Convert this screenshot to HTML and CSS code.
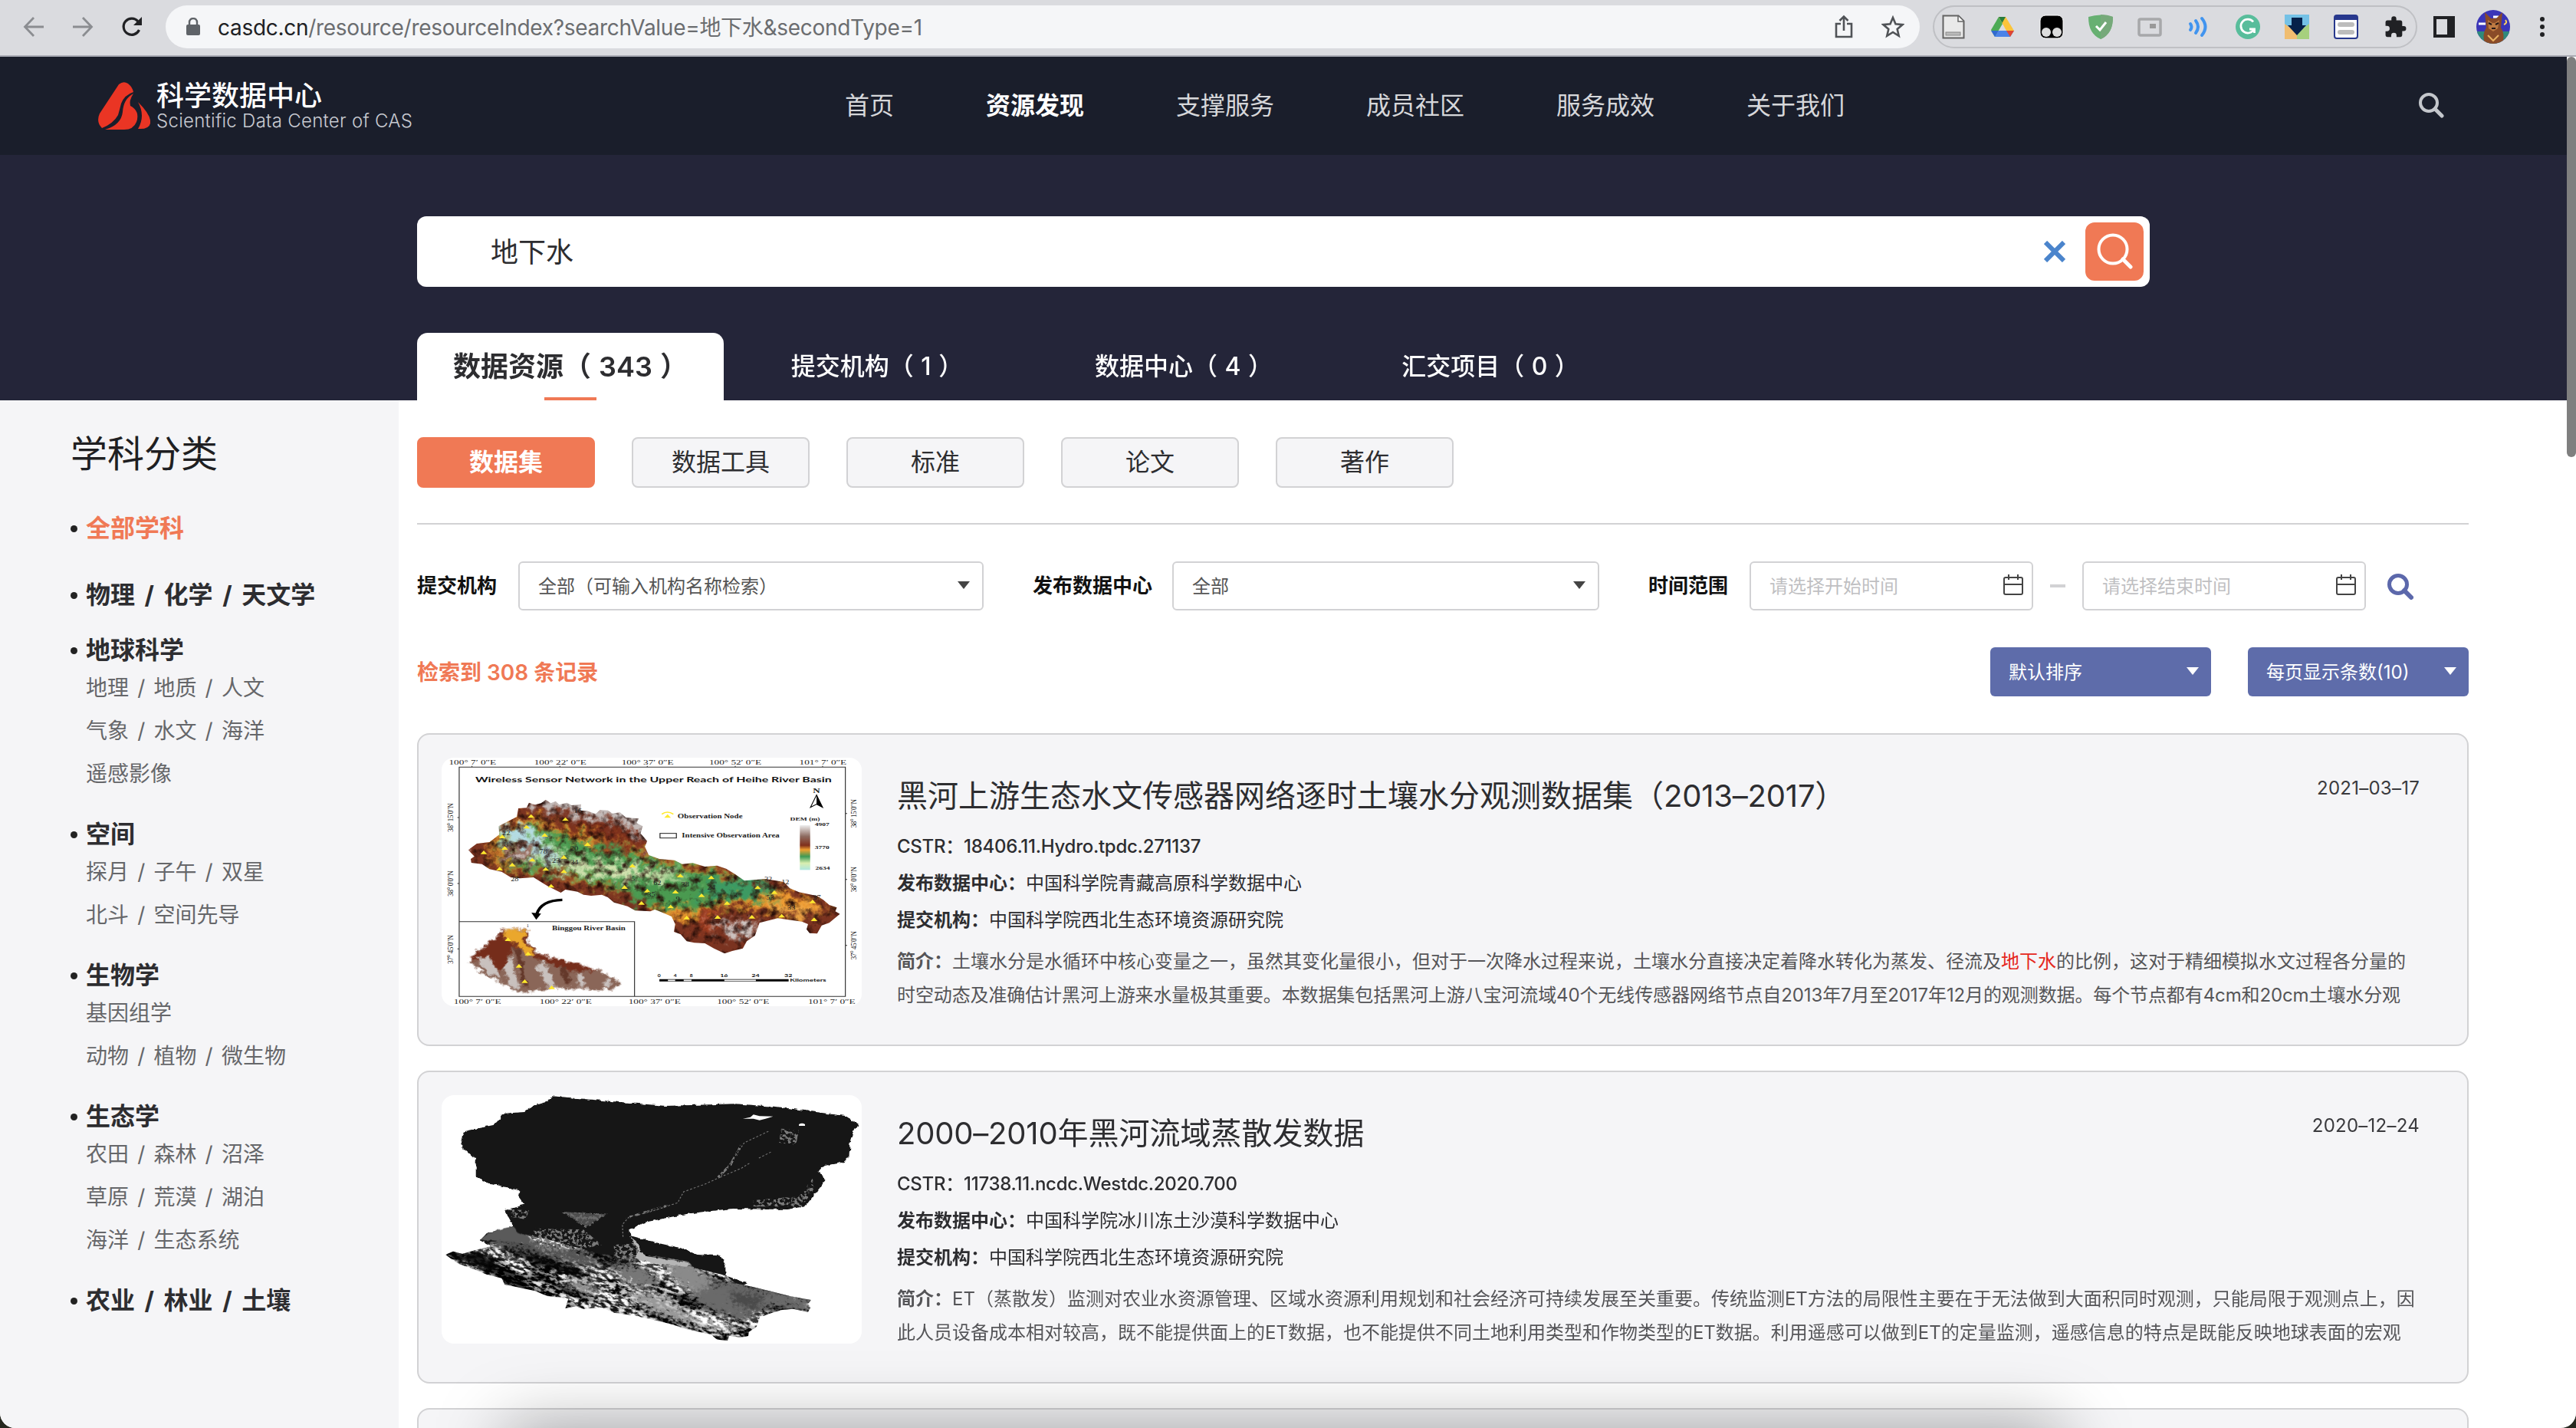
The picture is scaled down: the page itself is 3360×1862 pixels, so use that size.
FILE: index.html
```html
<!DOCTYPE html>
<html lang="zh-CN">
<head>
<meta charset="utf-8">
<title>科学数据中心</title>
<link rel="stylesheet" href="styles.css">
</head>
<body>
<div class="window">
  <div class="chrome">
    <div class="chrome-nav">
      <svg width="28" height="28" viewBox="0 0 28 28" fill="none" stroke="#8b8d91" stroke-width="2.8"><path d="M27 14H3M14 2L2.500 14L14 26"/></svg>
      <svg width="28" height="28" viewBox="0 0 28 28" fill="none" stroke="#8b8d91" stroke-width="2.800"><path d="M1 14H25M14 2L25.500 14L14 26"/></svg>
      <svg width="28" height="28" viewBox="0 0 28 28" fill="none" stroke="#202124" stroke-width="3.200"><path d="M23.500 18A10.600 10.600 0 1 1 22 7"/><path d="M27 1v11H16z" fill="#202124" stroke="none"/></svg>
    </div>
    <div class="urlbar">
      <svg width="18" height="24" viewBox="0 0 18 24"><rect x="0" y="9" width="18" height="14" rx="2" fill="#5f6368"/><path d="M4 10V6a5 5 0 0 1 10 0v4" fill="none" stroke="#5f6368" stroke-width="2.400"/></svg>
      <div class="url"><b>casdc.cn</b>/resource/resourceIndex?searchValue=地下水&amp;secondType=1</div>
      <svg width="24" height="32" viewBox="0 0 24 32" fill="none" stroke="#505357" stroke-width="2.600"><path d="M8 12H2v17h20V12h-6M12 21V3M6.500 8L12 2.500L17.500 8"/></svg>
      <svg width="30" height="30" viewBox="0 0 30 30" fill="none" stroke="#505357" stroke-width="2.600"><path d="M15 3l3.500 8.300 9 .8-6.800 5.900 2 8.800L15 22l-7.700 4.800 2-8.800L2.500 12.100l9-.8z"/></svg>
    </div>
    <div class="extensions">
      <svg viewBox="0 0 32 32"><path d="M2.500 1.500h20l7 7v22h-27z" fill="#e9e9e9" stroke="#636363" stroke-width="2"/><path d="M22 2v7h7" fill="#fff" stroke="#636363" stroke-width="1.500"/><rect x="6" y="23" width="19" height="4" fill="#bbb" stroke="#888"/></svg>
      <svg viewBox="0 0 32 32"><path d="M11 3l5 9L6 29 1 20z" fill="#4caa55"/><path d="M11 3h9l11 18H21z" fill="#fbc43a"/><path d="M11 3h9l-4.500 8z" fill="#287c3d"/><path d="M6 29l5-8h20l-5 8z" fill="#4b82e8"/><path d="M21 21h10l-5 8z" fill="#e04632"/><path d="M1 21h10l-5 8z" fill="#316ad0"/></svg>
      <svg viewBox="0 0 32 32"><rect x="1" y="1" width="30" height="30" rx="7" stroke="#fff" fill="#000"/><circle cx="9" cy="23" r="6" fill="#ddd"/><circle cx="23" cy="23" r="6" fill="#ddd"/></svg>
      <svg viewBox="0 0 32 32"><path d="M0 3Q16-2 32 3C32 18 27 27 16 32C5 27 0 18 0 3z" fill="#67b072"/><path d="M16 0Q25 0 32 3C32 18 27 27 16 32z" fill="#76a97a"/><path d="M10 15l5 5 8-10" stroke="#fff" stroke-width="3" fill="none"/></svg>
      <svg viewBox="0 0 32 32"><rect x="2" y="6" width="28" height="21" rx="2" fill="none" stroke="#a7a8aa" stroke-width="3.500"/><rect x="16" y="12" width="8" height="6" fill="#999"/></svg>
      <svg viewBox="0 0 32 32" fill="none" stroke="#4194ef" stroke-width="4" stroke-linecap="round"><path d="M5 12q3 4 0 8M12 8q6 8 0 16M20 5q9 11 0 22"/></svg>
      <svg viewBox="0 0 32 32"><circle cx="16" cy="16" r="16" fill="#58bd9b"/><path d="M23 9.500A9 9 0 1 0 24 19M18 19h6.500v5" fill="none" stroke="#fff" stroke-width="2.800"/></svg>
      <svg viewBox="0 0 32 32"><path d="M0 0h32v16H0z" fill="#74c1e6"/><path d="M0 12l16 12v8H0z" fill="#f0bd70"/><path d="M32 12L16 24v8h16z" fill="#a6d07d"/><path d="M9 4h14v10h5L16 27 4 14h5z" fill="#06214a"/></svg>
      <svg viewBox="0 0 32 32"><rect x="1" y="1" width="30" height="30" rx="3" fill="#fff" stroke="#27388d" stroke-width="2"/><path d="M1 1h30v6H1z" fill="#27388d"/><rect x="5" y="10" width="22" height="6" rx="3" fill="#bcbcbc"/><rect x="5" y="20" width="22" height="6" rx="3" fill="#bcbcbc"/></svg>
      <svg viewBox="0 0 32 32"><path transform="translate(1 1) scale(1.280)" d="M20.500 11H19V7a2 2 0 0 0-2-2h-4V3.500a2.500 2.500 0 0 0-5 0V5H4a2 2 0 0 0-2 2v3.800h1.500a2.700 2.700 0 0 1 0 5.400H2V20a2 2 0 0 0 2 2h3.800v-1.500a2.700 2.700 0 0 1 5.400 0V22H17a2 2 0 0 0 2-2v-4h1.500a2.500 2.500 0 0 0 0-5z" fill="#202124"/></svg>
    </div>
    <svg class="panel" width="28" height="28" viewBox="0 0 28 28"><path d="M0 0h28v28H0zM4 4v20h14V4z" fill="#202124" fill-rule="evenodd"/></svg>
    <svg class="avatar" width="44" height="44" viewBox="0 0 44 44"><clipPath id="av"><circle cx="22" cy="22" r="22"/></clipPath><g clip-path="url(#av)"><path d="M0 0h44v44H0z" fill="#3a35b8"/><path d="M0 28h44v16H0z" fill="#2f8a7c"/><path d="M3 18h9M22 9h7" stroke="#fff" stroke-width="3"/><path d="M38 13q3 4-2 6" stroke="#ffd35b" fill="none" stroke-width="2"/><path d="M11 3l8 8h7l8-8-2 20q6 8 2 21H11q-4-12 2-21z" fill="#8a4b28"/><path d="M15 13l6 4h3l6-4-2 11-6 4-6-4z" fill="#bd7a42"/><path d="M15 33l7 7 7-7" stroke="#eab161" fill="none" stroke-width="2"/><path d="M16 17l4 2M29 17l-4 2M20 24h5" stroke="#251717" stroke-width="2"/></g></svg>
    <svg class="dots" width="8" height="28" viewBox="0 0 8 28" fill="#202124"><circle cx="4" cy="4" r="3"/><circle cx="4" cy="14" r="3"/><circle cx="4" cy="24" r="3"/></svg>
  </div>

  <div class="viewport">
    <div class="page">
      <header class="header">
        <div class="brand">
          <svg width="68" height="62" viewBox="0 0 68 62" fill="#ea3524"><path d="M27 3Q33-2 39 2Q45 7 46 13Q34 17 30 28Q28 36 26 43Q20 54 5 60Q-3 52 2 41z"/><path d="M46 15Q40 24 42 31Q55 38 50 52Q46 62 34 62H9Q30 56 32 39Q33 22 46 15z"/><path d="M52 26Q70 44 68 54Q66 62 52 61Q62 44 52 26z"/></svg>
          <div class="brand-text"><div class="brand-cn">科学数据中心</div><div class="brand-en">Scientific Data Center of CAS</div></div>
        </div>
        <nav class="nav"><a>首页</a><a class="on">资源发现</a><a>支撑服务</a><a>成员社区</a><a>服务成效</a><a>关于我们</a></nav>
        <svg class="head-search" width="34" height="34" viewBox="0 0 34 34" fill="none" stroke="#c4c7cc" stroke-width="4"><circle cx="14" cy="14" r="11"/><path d="M22 22l9 9" stroke-width="5" stroke-linecap="round"/></svg>
      </header>

      <section class="hero">
        <div class="search">
          <div class="search-value">地下水</div>
          <svg width="28" height="28" viewBox="0 0 28 28" stroke="#4a84cc" stroke-width="6"><path d="M2 2l24 24M26 2L2 26"/></svg>
          <div class="search-btn"><svg width="48" height="48" viewBox="0 0 48 48" fill="none" stroke="#fff" stroke-width="4"><circle cx="22" cy="21" r="18.500"/><path d="M35 34l10 10" stroke-width="5" stroke-linecap="round"/></svg></div>
        </div>
        <div class="tabs">
          <div class="tab active">数据资源（ 343 ）</div>
          <div class="tab">提交机构（ 1 ）</div>
          <div class="tab">数据中心（ 4 ）</div>
          <div class="tab">汇交项目（ 0 ）</div>
        </div>
      </section>

      <div class="body">
        <aside class="sidebar">
          <h2>学科分类</h2>
          <ul class="subjects">
            <li class="lone all"><h3>全部学科</h3></li>
            <li class="lone"><h3>物理 / 化学 / 天文学</h3></li>
            <li><h3>地球科学</h3><p>地理 / 地质 / 人文</p><p>气象 / 水文 / 海洋</p><p>遥感影像</p></li>
            <li><h3>空间</h3><p>探月 / 子午 / 双星</p><p>北斗 / 空间先导</p></li>
            <li><h3>生物学</h3><p>基因组学</p><p>动物 / 植物 / 微生物</p></li>
            <li><h3>生态学</h3><p>农田 / 森林 / 沼泽</p><p>草原 / 荒漠 / 湖泊</p><p>海洋 / 生态系统</p></li>
            <li><h3>农业 / 林业 / 土壤</h3></li>
          </ul>
        </aside>

        <main class="content">
          <div class="types"><span class="type on">数据集</span><span class="type">数据工具</span><span class="type">标准</span><span class="type">论文</span><span class="type">著作</span></div>
          <div class="filters">
            <label>提交机构</label><div class="select org">全部（可输入机构名称检索）<i class="caret"></i></div>
            <label>发布数据中心</label><div class="select center">全部<i class="caret"></i></div>
            <label>时间范围</label>
            <div class="select date">请选择开始时间<svg width="26" height="28" viewBox="0 0 26 28" fill="none" stroke="#444" stroke-width="2"><rect x="1" y="4" width="24" height="22" rx="2"/><path d="M1 13h24M7 0v7M19 0v7"/></svg></div>
            <i class="dash"></i>
            <div class="select date">请选择结束时间<svg width="26" height="28" viewBox="0 0 26 28" fill="none" stroke="#444" stroke-width="2"><rect x="1" y="4" width="24" height="22" rx="2"/><path d="M1 13h24M7 0v7M19 0v7"/></svg></div>
            <svg class="go" width="34" height="34" viewBox="0 0 34 34" fill="none" stroke="#5c68ab" stroke-width="5"><circle cx="14" cy="14" r="11.500"/><path d="M22 22l9 9" stroke-width="6" stroke-linecap="round"/></svg>
          </div>
          <div class="result-bar">
            <div class="count">检索到 308 条记录</div>
            <div class="drop">默认排序<i class="caret"></i></div>
            <div class="drop">每页显示条数(10)<i class="caret"></i></div>
          </div>

          <div class="cards">
            <article class="card">
              <svg class="thumb" viewBox="92 144 1385 972" preserveAspectRatio="none">
                <defs>
                  <filter id="terrain" x="-5%" y="-5%" width="110%" height="110%" color-interpolation-filters="sRGB">
                    <feGaussianBlur in="SourceGraphic" stdDeviation="13" result="b"/>
                    <feTurbulence type="fractalNoise" baseFrequency="0.035 0.030" numOctaves="4" seed="7" result="n"/>
                    <feDisplacementMap in="b" in2="n" scale="110" xChannelSelector="R" yChannelSelector="G" result="d"/>
                    <feColorMatrix in="n" type="matrix" values="0 0 0 0 0.150  0 0 0 0 0.050  0 0 0 0 0.030  0 0 2.600 0 -1.200" result="s"/>
                    <feComposite in="s" in2="d" operator="in" result="sh"/>
                    <feMerge><feMergeNode in="d"/><feMergeNode in="sh"/></feMerge>
                  </filter>
                  <filter id="edge" x="-5%" y="-5%" width="110%" height="110%" color-interpolation-filters="sRGB"><feGaussianBlur in="SourceGraphic" stdDeviation="3" result="b"/><feTurbulence type="fractalNoise" baseFrequency="0.050" numOctaves="3" seed="4" result="n"/><feDisplacementMap in="b" in2="n" scale="30" xChannelSelector="R" yChannelSelector="G"/></filter>
                  <linearGradient id="dem" x1="0" y1="0" x2="0" y2="1"><stop offset="0" stop-color="#eee"/><stop offset=".25" stop-color="#8d6b60"/><stop offset=".45" stop-color="#80301b"/><stop offset=".55" stop-color="#f0a030"/><stop offset=".7" stop-color="#3e9a55"/><stop offset=".85" stop-color="#d9eeb0"/><stop offset="1" stop-color="#aee6e0"/></linearGradient>
                  <clipPath id="basin"><path d="M180 505L208 480L250 474L282 445L280 412L340 375L345 342L372 340L380 320L400 328L420 322L435 308L452 322L468 314L480 328L505 320L520 330L552 326L550 350L572 352L600 364L614 348L640 350L655 362L680 358L700 378L742 382L735 400L755 412L748 440L770 470L762 492L775 525L810 540L860 545L885 560L920 556L960 570L1000 566L1030 578L1060 600L1090 625L1160 618L1220 630L1240 655L1270 670L1330 685L1350 700L1370 720L1395 730L1390 745L1405 755L1370 790L1345 800L1330 832L1305 830L1295 815L1300 795L1280 785L1200 772L1140 790L1125 840L1098 862L1085 890L1050 900L1025 910L990 890L960 870L925 868L900 862L880 835L858 825L862 795L850 765L810 745L795 738L780 745L730 742L705 725L660 710L640 690L620 680L585 684L560 680L540 668L500 660L485 672L440 645L395 612L350 616L320 612L290 590L250 580L225 560L190 555L188 540L200 530z"/></clipPath>
                </defs>
                <rect x="92" y="144" width="1385" height="972" fill="#fff"/>
                <g fill="none" stroke="#333" stroke-width="3"><path d="M150 181H1423V1078H150zM150 785H728V1078M192 176v6M482 176v6M770 176v6M1060 176v6M1348 176v6M144 378h6M144 636h6M144 892h6M1423 362h6M1423 620h6M1423 878h6"/></g>
                <g clip-path="url(#basin)"><g filter="url(#terrain)">
                  <path d="M150 270H1450V950H150z" fill="#7a3320"/>
                  <path d="M350 270L780 330L800 530L745 450L690 400L540 365L420 350z" fill="#c4bcba"/>
                  <path d="M240 440Q330 340 450 400T640 455Q760 530 1000 580Q1100 620 1230 670T1380 740L1200 765Q1040 690 940 760T740 690Q560 630 440 610T270 580z" fill="#ef9a2e"/>
                  <path d="M270 440Q340 365 460 430T640 480Q800 555 1000 595Q1130 640 1210 700Q1060 690 930 730T700 670Q560 615 440 598T290 560z" fill="#4a9a50"/>
                  <path d="M280 420Q350 370 430 460T560 540Q800 570 920 615Q800 640 680 620T500 590Q380 555 290 510z" fill="#b9d9a0"/>
                  <path d="M480 560Q620 550 850 605Q700 625 600 600T480 580z" fill="#d5e2b0"/>
                  <path d="M280 410Q350 380 410 455T490 560Q390 530 340 480T275 455z" fill="#b4dce4"/>
                  <ellipse cx="1060" cy="655" rx="130" ry="36" fill="#3c9a63"/>
                  <path d="M1150 690L1340 740L1280 780L1170 735z" fill="#eda545"/>
                  <path d="M600 465L730 480L700 500L600 495zM430 590H510V612H420z" fill="#8c3a20"/>
                  <path d="M500 400L640 410L740 440L740 500L640 450L500 430z" fill="#7c2f1b"/>
                  <path d="M960 775L1050 795L1130 785L1120 850L1030 835z" fill="#d2cbc9"/>
                  <path d="M960 740L980 800L940 830" fill="none" stroke="#d0481e" stroke-width="14"/>
                  <ellipse cx="335" cy="522" rx="50" ry="38" fill="#7a3520"/><ellipse cx="335" cy="528" rx="28" ry="24" fill="#d0c8c8"/>
                </g></g>
                <g filter="url(#edge)">
                  <path d="M300 815L378 815L375 870L405 908L470 940L540 965L610 975L680 1022L655 1052L540 1048L470 1045L345 1062L300 1030L230 990L185 940L200 910L240 875L290 850z" fill="#8a6658"/>
                  <path d="M300 815L378 815L375 870L405 908L610 975L520 980L410 930L330 880L290 980L185 930L240 875z" fill="#752d1b"/>
                  <path d="M205 925L250 920L290 1010L245 985zM300 950L320 920L350 1050L310 1030zM400 950L430 940L470 1040L440 1040zM540 990L560 985L560 1040H540zM630 1010L650 1010L645 1045H630z" fill="#c9c1be"/>
                  <path d="M330 880L350 900L380 1040L360 1040zM480 960L505 965L520 1030L500 1030z" fill="#64382a"/>
                  <path d="M300 815L378 818L360 860L400 915L380 918L330 865L295 850z" fill="#eaa72d"/>
                </g>
                <path d="M490 700Q420 702 406 755" fill="none" stroke="#000" stroke-width="10"/><path d="M388 750l32 4-16 24z"/>
                <g fill="#ffe92e"><path id="tri" d="M376 379l11-14 11 14z"/><use href="#tri" x="113" y="12"/><use href="#tri" x="-15" y="42"/><use href="#tri" x="-95" y="80"/><use href="#tri" x="45" y="74"/><use href="#tri" x="-87" y="125"/><use href="#tri" x="-156" y="142"/><use href="#tri" x="4" y="171"/><use href="#tri" x="-62" y="190"/><use href="#tri" x="-104" y="206"/><use href="#tri" x="48" y="207"/><use href="#tri" x="186" y="110"/><use href="#tri" x="108" y="160"/><use href="#tri" x="108" y="216"/><use href="#tri" x="334" y="194"/><use href="#tri" x="492" y="233"/><use href="#tri" x="594" y="240"/><use href="#tri" x="308" y="278"/><use href="#tri" x="383" y="292"/><use href="#tri" x="476" y="296"/><use href="#tri" x="562" y="310"/><use href="#tri" x="646" y="340"/><use href="#tri" x="747" y="279"/><use href="#tri" x="802" y="298"/><use href="#tri" x="928" y="334"/><use href="#tri" x="826" y="390"/><use href="#tri" x="728" y="394"/><use href="#tri" x="615" y="395"/><use href="#tri" x="513" y="397"/><use href="#tri" x="364" y="340"/><use href="#tri" x="460" y="354"/><use href="#tri" x="66" y="273"/><use href="#tri" x="933" y="404"/><use href="#tri" x="-76" y="482"/><use href="#tri" x="-10" y="538"/><use href="#tri" x="-40" y="586"/><use href="#tri" x="-21" y="646"/><use href="#tri" x="68" y="670"/><use href="#tri" x="450" y="0"/></g>
                <path d="M818 365q18-16 38 0" fill="none" stroke="#ffe92e" stroke-width="5"/>
                <rect x="812" y="440" width="54" height="18" fill="none" stroke="#222" stroke-width="3"/>
                <rect x="1273" y="408" width="34" height="175" fill="url(#dem)"/>
                <path d="M1328 290l-20 48 20-12 20 12z" fill="#fff" stroke="#000" stroke-width="3"/><path d="M1328 290v36l20 12z"/>
                <path d="M810 1015H1236" stroke="#000" stroke-width="9"/><path d="M838 1015h24M890 1015h26M1024 1015h104" stroke="#fff" stroke-width="5"/>
                <g class="map-serif" font-size="24">
                  <text x="116" y="170" textLength="156" lengthAdjust="spacingAndGlyphs">100° 7′ 0″E</text><text x="397" y="170" textLength="172" lengthAdjust="spacingAndGlyphs">100° 22′ 0″E</text><text x="685" y="170" textLength="172" lengthAdjust="spacingAndGlyphs">100° 37′ 0″E</text><text x="974" y="170" textLength="172" lengthAdjust="spacingAndGlyphs">100° 52′ 0″E</text><text x="1271" y="170" textLength="156" lengthAdjust="spacingAndGlyphs">101° 7′ 0″E</text>
                  <text x="132" y="1106" textLength="156" lengthAdjust="spacingAndGlyphs">100° 7′ 0″E</text><text x="415" y="1106" textLength="172" lengthAdjust="spacingAndGlyphs">100° 22′ 0″E</text><text x="708" y="1106" textLength="172" lengthAdjust="spacingAndGlyphs">100° 37′ 0″E</text><text x="1000" y="1106" textLength="172" lengthAdjust="spacingAndGlyphs">100° 52′ 0″E</text><text x="1300" y="1106" textLength="156" lengthAdjust="spacingAndGlyphs">101° 7′ 0″E</text>
                  <text transform="translate(131 434) rotate(-90)" font-size="27" textLength="112">38° 15′0″N</text><text transform="translate(131 686) rotate(-90)" font-size="27" textLength="100">38° 0′0″N</text><text transform="translate(131 950) rotate(-90)" font-size="27" textLength="112">37° 45′0″N</text>
                  <text transform="translate(1460 418) rotate(-90)" font-size="27" textLength="112">38° 15′0″N</text><text transform="translate(1460 670) rotate(-90)" font-size="27" textLength="100">38° 0′0″N</text><text transform="translate(1460 934) rotate(-90)" font-size="27" textLength="112">37° 45′0″N</text>
                </g>
                <g class="map-serif" font-weight="700" font-size="23">
                  <text x="870" y="380" textLength="214" lengthAdjust="spacingAndGlyphs">Observation Node</text><text x="884" y="457" textLength="322" lengthAdjust="spacingAndGlyphs">Intensive Observation Area</text><text x="456" y="818" textLength="242" lengthAdjust="spacingAndGlyphs">Binggou River Basin</text>
                  <text x="1241" y="389" font-size="17" textLength="98" lengthAdjust="spacingAndGlyphs">DEM (m)</text><text x="1322" y="410" font-size="17" textLength="48" lengthAdjust="spacingAndGlyphs">4907</text><text x="1322" y="502" font-size="17" textLength="48" lengthAdjust="spacingAndGlyphs">3770</text><text x="1324" y="581" font-size="17" textLength="48" lengthAdjust="spacingAndGlyphs">2634</text>
                  <text x="1316" y="281" font-size="24" textLength="24" lengthAdjust="spacingAndGlyphs">N</text>
                </g>
                <g class="map-serif" font-size="26"><text x="292" y="446">22</text><text x="298" y="492">8</text><text x="414" y="520">78</text><text x="456" y="555">23</text><text x="516" y="562">34</text><text x="516" y="506">20</text><text x="528" y="361">16</text><text x="320" y="628">28</text><text x="716" y="626">5</text><text x="790" y="641">62</text><text x="882" y="648">38</text><text x="968" y="661">24</text><text x="1054" y="690">3</text><text x="1162" y="698">53</text><text x="1232" y="738">33</text><text x="864" y="705">9</text><text x="770" y="688">35</text><text x="1156" y="628">32</text><text x="1212" y="640">12</text><text x="1316" y="698">37</text><text x="372" y="808" font-size="16">1</text></g>
                <g class="map-sans"><text x="203" y="241" font-size="29" font-weight="700" textLength="1175" lengthAdjust="spacingAndGlyphs">Wireless Sensor Network in the Upper Reach of Heihe River Basin</text>
                  <g font-size="17" font-weight="700"><text x="804" y="1003">0</text><text x="857" y="1003">4</text><text x="910" y="1003">8</text><text x="1010" y="1003" textLength="26" lengthAdjust="spacingAndGlyphs">16</text><text x="1114" y="1003" textLength="26" lengthAdjust="spacingAndGlyphs">24</text><text x="1222" y="1003" textLength="26" lengthAdjust="spacingAndGlyphs">32</text><text x="1240" y="1019" textLength="120" lengthAdjust="spacingAndGlyphs">Kilometers</text></g></g>
              </svg>
              <div class="info">
                <div class="title-row"><h4>黑河上游生态水文传感器网络逐时土壤水分观测数据集（<span class="num">2013–2017</span>）</h4><time>2021–03–17</time></div>
                <div class="meta cstr">CSTR：18406.11.Hydro.tpdc.271137</div>
                <div class="meta"><b>发布数据中心：</b>中国科学院青藏高原科学数据中心</div>
                <div class="meta"><b>提交机构：</b>中国科学院西北生态环境资源研究院</div>
                <div class="abstract"><p><b>简介：</b>土壤水分是水循环中核心变量之一，虽然其变化量很小，但对于一次降水过程来说，土壤水分直接决定着降水转化为蒸发、径流及<em>地下水</em>的比例，这对于精细模拟水文过程各分量的</p><p class="tight">时空动态及准确估计黑河上游来水量极其重要。本数据集包括黑河上游八宝河流域40个无线传感器网络节点自2013年7月至2017年12月的观测数据。每个节点都有4cm和20cm土壤水分观</p></div>
              </div>
            </article>

            <article class="card">
              <svg class="thumb" viewBox="92 114 1385 972" preserveAspectRatio="none">
                <defs>
                  <filter id="speckle" x="0" y="0" width="100%" height="100%" color-interpolation-filters="sRGB">
                    <feTurbulence type="fractalNoise" baseFrequency="0.045 0.090" numOctaves="4" seed="11" result="n"/>
                    <feColorMatrix in="n" type="matrix" values="5 2.500 0 0 -3.300  5 2.500 0 0 -3.300  5 2.500 0 0 -3.300  0 0 0 0 1" result="g"/>
                    <feTurbulence type="fractalNoise" baseFrequency="0.004 0.014" numOctaves="3" seed="21"/>
                    <feColorMatrix type="matrix" values="3.500 0 0 0 -1.250  3.500 0 0 0 -1.250  3.500 0 0 0 -1.250  0 0 0 0 1" result="m"/>
                    <feComposite in="g" in2="m" operator="arithmetic" k1="0.500" k2="0.500" k3="0.500" k4="-0.280"/>
                  </filter>
                  <filter id="dust" color-interpolation-filters="sRGB"><feTurbulence type="fractalNoise" baseFrequency="0.090" numOctaves="3" seed="3"/><feColorMatrix type="matrix" values="0 0 0 0 0.480  0 0 0 0 0.480  0 0 0 0 0.480  8 0 0 0 -3.800"/><feComposite in2="SourceGraphic" operator="in"/></filter>
                  <filter id="rough"><feTurbulence type="fractalNoise" baseFrequency="0.060" numOctaves="2" seed="2" result="n"/><feDisplacementMap in="SourceGraphic" in2="n" scale="12" xChannelSelector="R" yChannelSelector="G"/></filter>
                  <filter id="haze" color-interpolation-filters="sRGB"><feGaussianBlur in="SourceGraphic" stdDeviation="9" result="b"/><feTurbulence type="fractalNoise" baseFrequency="0.080" numOctaves="3" seed="5" result="n"/><feDisplacementMap in="b" in2="n" scale="70" xChannelSelector="R" yChannelSelector="G"/></filter>
                  <clipPath id="hills"><path d="M105 738L130 725L160 735L220 715L252 706L250 690L380 660L480 690L610 735L720 745L760 735L905 765L925 790L1030 820L1060 850L1110 862L1190 885L1240 900L1310 915L1300 930L1308 945L1300 962L1250 950L1210 955L1170 970L1140 985L1130 1020L1105 1040L1103 1056L1080 1062L1040 1055L1035 1074L1000 1070L980 1050L900 1030L850 1010L780 990L720 975L660 965L620 945L560 950L535 940L500 948L510 910L440 900L400 880L340 865L300 855L290 830L240 815L200 795L150 775L125 755z"/></clipPath>
                </defs>
                <rect x="92" y="114" width="1385" height="972" fill="#fff"/>
                <path filter="url(#rough)" fill="#171717" d="M457 118L830 156L1060 148L1200 160L1425 196L1468 232L1452 245L1438 300L1435 360L1420 375L1345 393L1334 415L1358 445L1340 475L1290 550L1230 561L1050 558L900 578L760 612L712 640L715 664L810 694L880 712L935 738L1010 742L1028 775L1028 820L1100 850L1050 880L800 850L600 800L250 700L220 682L240 655L330 628L300 565L365 542L345 510L348 487L230 452L205 432L205 365L155 310L167 255L265 230L300 185L365 180L395 155L440 140z"/>
                <g clip-path="url(#hills)">
                  <g transform="rotate(22 700 860)"><rect x="0" y="560" width="1500" height="620" filter="url(#speckle)"/></g>
                  <g filter="url(#haze)">
                    <path d="M105 735L240 715L290 790L230 800L150 770z" fill="#080808" opacity=".85"/>
                    <path d="M300 700L460 750L620 830L580 840L440 790L300 740z" fill="#0a0a0a" opacity=".7"/>
                    <path d="M200 660L420 690L560 730L640 790L560 780L400 730L250 700z" fill="#555"/>
                    <path d="M640 770L740 780L820 830L760 870L690 840z" fill="#777"/>
                    <path d="M820 760L910 770L1000 840L940 890L860 850z" fill="#8a8a8a"/>
                    <path d="M900 890L1040 840L1310 910L1310 960L1180 940L1090 1000L960 950z" fill="#6a6a6a"/>
                    <path d="M1040 880L1160 900L1120 960L1060 930z" fill="#4a4a4a"/>
                    <path d="M480 840L560 845L640 890L560 890z" fill="#888"/>
                    <path d="M680 870L830 890L900 960L1080 1020L1060 1050L900 1010L760 950z" fill="#fff" opacity=".6"/>
                    <path d="M570 640L860 700L1040 750V810L920 770L760 740L700 760L560 720z" fill="#191919"/>
                  </g>
                </g>
                <path d="M220 680Q250 640 330 628L340 650Q400 670 450 740L360 690z" fill="#5a5a5a" filter="url(#rough)"/>
                <g filter="url(#dust)"><path fill="#777" d="M485 570L640 578L570 635zM400 635L560 640L620 700L440 740L380 690zM660 700L740 690L740 755L660 750zM1210 245L1270 250L1260 310L1205 300zM1120 525L1270 510L1315 440L1320 480L1280 550H1120zM310 560L380 565L370 600L320 590z"/></g>
                <path d="M490 570L635 580L570 630z" fill="#666" opacity=".7" filter="url(#rough)"/>
                <path d="M712 665L738 690L750 730L770 745L910 770L900 785L780 770L730 750L742 720z" fill="#b5b5b5" filter="url(#rough)"/>
                <g fill="none" stroke="#777" stroke-width="3" stroke-dasharray="7 6"><path d="M690 668L688 620L710 590L780 570L870 535L890 492L960 462L1010 435L1050 370L1090 300L1170 255M1010 435L1080 400L1110 378M1138 360L1180 335"/></g>
                <path d="M700 595L790 562L840 545M1000 440L1045 385L1080 310" fill="none" stroke="#555" stroke-width="9" filter="url(#dust)"/>
                <path d="M1085 206L1110 200L1120 190L1140 196L1185 197L1160 206L1140 212L1120 206zM1270 228q10-8 20 0v6h-20z" fill="#fff"/>
              </svg>
              <div class="info">
                <div class="title-row"><h4><span class="num">2000–2010</span>年黑河流域蒸散发数据</h4><time>2020–12–24</time></div>
                <div class="meta cstr">CSTR：11738.11.ncdc.Westdc.2020.700</div>
                <div class="meta"><b>发布数据中心：</b>中国科学院冰川冻土沙漠科学数据中心</div>
                <div class="meta"><b>提交机构：</b>中国科学院西北生态环境资源研究院</div>
                <div class="abstract"><p><b>简介：</b>ET（蒸散发）监测对农业水资源管理、区域水资源利用规划和社会经济可持续发展至关重要。传统监测ET方法的局限性主要在于无法做到大面积同时观测，只能局限于观测点上，因</p><p>此人员设备成本相对较高，既不能提供面上的ET数据，也不能提供不同土地利用类型和作物类型的ET数据。利用遥感可以做到ET的定量监测，遥感信息的特点是既能反映地球表面的宏观</p></div>
              </div>
            </article>

            <article class="card"></article>
          </div>
        </main>
      </div>
    </div>
    <div class="scrollbar"><div class="thumb-bar"></div></div>
  </div>
  <div class="dock-shadow"></div>
</div>
</body>
</html>
```
FILE: styles.css
```css
* { box-sizing: border-box; }
body { margin: 0; background: #26281f; font-family: Inter, "Noto Sans CJK SC", sans-serif; color: #2d2d30; }
h2, h3, h4, p, ul { margin: 0; padding: 0; font-weight: 400; }
svg { display: block; flex: none; }
.window { position: relative; width: 3360px; height: 1862px; overflow: hidden; display: flex; flex-direction: column; border-radius: 0 0 20px 20px; background: #fff; }

/* browser toolbar */
.chrome { height: 74px; flex: none; display: flex; align-items: center; padding-bottom: 2px; background: #dadbdf; border-bottom: 2px solid #a9abb4; }
.chrome-nav { display: flex; gap: 36px; padding-left: 30px; width: 216px; }
.urlbar { width: 2288px; height: 56px; border-radius: 28px; background: #f5f6f8; display: flex; align-items: center; padding: 0 20px 0 27px; }
.url { flex: 1; margin-left: 23px; padding-top: 2px; font-size: 28px; line-height: 40px; letter-spacing: -0.290px; color: #6b6d70; white-space: nowrap; }
.url b { font-weight: 400; color: #202124; }
.urlbar > svg:nth-of-type(2) { margin-right: 37px; }
.extensions { width: 632px; height: 56px; margin-left: 17px; border: 2px solid #bfc0c4; border-radius: 28px; display: flex; align-items: center; gap: 32px; padding-left: 9px; }
.extensions svg { width: 32px; height: 32px; }
.panel { margin-left: 21px; }
.avatar { margin-left: 28px; }
.dots { margin-left: 38px; }

.viewport { flex: 1; display: flex; min-height: 0; }
.page { width: 3348px; display: flex; flex-direction: column; }
.scrollbar { width: 12px; background: #fff; }
.thumb-bar { height: 522px; background: #7f7f7f; border-radius: 6px; }

/* site header */
.header { height: 128px; flex: none; background: #1a1e2b; display: flex; align-items: center; padding-left: 128px; }
.brand { width: 974px; display: flex; gap: 8px; align-items: center; }
.brand-text { color: #fff; white-space: nowrap; padding-top: 2px; }
.brand-cn { font-size: 36px; line-height: 38px; font-weight: 500; }
.brand-en { font-size: 24px; line-height: 28px; letter-spacing: 0.280px; font-weight: 300; color: #c9cbd2; }
.nav { display: flex; gap: 120px; width: 2053px; font-size: 32px; line-height: 44px; color: #d6d7da; }
.nav .on { color: #fff; font-weight: 700; }
.head-search { margin: 0 0 2px -1px; }

/* search and result tabs */
.hero { height: 320px; flex: none; background: #242539; padding: 80px 0 0 544px; }
.search { width: 2260px; height: 92px; background: #fff; border-radius: 12px; display: flex; align-items: center; padding: 0 8px 0 96px; }
.search-value { flex: 1; padding-top: 2px; font-size: 36px; line-height: 48px; }
.search-btn { width: 76px; height: 76px; margin-left: 26px; border-radius: 12px; background: #f07955; display: flex; align-items: center; justify-content: center; }
.tabs { display: flex; margin-top: 60px; }
.tab { position: relative; width: 400px; height: 88px; line-height: 88px; text-align: center; font-size: 32px; word-spacing: 1px; color: #fff; font-weight: 500; white-space: pre; }
.tab.active { background: #fff; color: #2d2d30; font-size: 36px; font-weight: 600; border-radius: 14px 14px 0 0; }
.tab.active::after { content: ""; position: absolute; left: 166px; bottom: 0; width: 68px; height: 4px; background: #f07955; }

.body { flex: 1; display: flex; min-height: 0; }
.sidebar { width: 520px; background: #f5f5f7; padding: 40px 0 0 92px; }
.sidebar h2 { font-size: 48px; line-height: 60px; color: #1f1f22; margin-bottom: 43px; }
.subjects { list-style: none; white-space: nowrap; }
.subjects li { margin-bottom: 28px; }
.subjects h3 { position: relative; font-size: 32px; line-height: 48px; font-weight: 700; padding-left: 20px; word-spacing: 5px; }
.subjects h3::before { content: ""; position: absolute; left: 0; top: 20px; width: 9px; height: 9px; border-radius: 50%; background: #222; }
.subjects p { position: relative; top: 1px; font-size: 28px; line-height: 56px; color: #66676a; padding-left: 20px; word-spacing: 3.300px; }
.subjects li:not(.lone) h3 { margin-bottom: -4px; }
.subjects .lone { margin-bottom: 24px; }
.subjects .all { margin-bottom: 39px; }
.subjects .all h3 { color: #f07955; }

.content { width: 2828px; padding: 48px 128px 0 24px; }
.types { display: flex; gap: 48px; padding-bottom: 46px; border-bottom: 2px solid #d2d2d4; }
.type { width: 232px; height: 66px; line-height: 62px; text-align: center; border: 2px solid #d2d2d4; border-radius: 8px; background: #f5f5f7; font-size: 32px; }
.type.on { background: #f07955; border-color: #f07955; color: #fff; font-weight: 700; }

.filters { display: flex; align-items: center; margin-top: 48px; height: 64px; white-space: nowrap; }
.filters label { font-size: 26px; line-height: 36px; padding-bottom: 1px; font-weight: 700; color: #111; margin-right: 28px; }
.select { height: 64px; border: 2px solid #d2d2d4; border-radius: 6px; display: flex; align-items: center; justify-content: space-between; padding: 0 16px 3px 24px; font-size: 24px; color: #555; }
.select.org { width: 607px; margin-right: 64px; }
.select.center { width: 557px; margin-right: 64px; margin-left: -2px; }
.select.date { width: 370px; padding-right: 11px; color: #bfbfc2; }
.caret { width: 0; height: 0; border: 8px solid transparent; border-top: 10px solid #444; border-bottom: 0; }
.dash { width: 20px; height: 4px; margin: 0 22px; background: #d2d2d4; }
.go { margin-left: 28px; margin-top: 2px; }

.result-bar { display: flex; align-items: center; gap: 48px; margin-top: 48px; height: 64px; }
.count { flex: 1; padding-bottom: 3px; font-size: 28px; font-weight: 600; color: #f07955; }
.drop { width: 288px; height: 64px; border-radius: 6px; background: #5e6caa; color: #fff; font-size: 24px; padding: 0 16px 3px 24px; display: flex; align-items: center; justify-content: space-between; }
.drop .caret { border-top-color: #fff; }

.cards { display: flex; flex-direction: column; gap: 32px; margin-top: 48px; }
.card { height: 408px; border: 2px solid #d2d2d4; border-radius: 16px; background: #f5f5f7; padding: 30px; display: flex; gap: 46px; }
.thumb { width: 548px; height: 324px; border-radius: 16px; }
.map-serif { font-family: "Liberation Serif", serif; fill: #222; }
.map-sans { font-family: Lato, sans-serif; fill: #111; }
.info { flex: 1; padding-top: 22px; white-space: nowrap; }
.title-row { display: flex; justify-content: space-between; margin-bottom: 14px; }
.title-row h4 { font-size: 40px; line-height: 56px; }
.num { letter-spacing: -0.200px; }
.title-row time { font-size: 24px; line-height: 28px; letter-spacing: 0.250px; margin: 4px 32px 0 0; color: #3a3a3d; }
.meta { font-size: 24px; line-height: 48px; }
.meta.cstr { font-weight: 500; letter-spacing: -0.260px; }
.meta b, .abstract b { font-weight: 700; }
.abstract { margin-top: 8px; font-size: 24px; line-height: 44px; color: #555558; }
.abstract em { font-style: normal; color: #e5281c; }
.abstract .tight { letter-spacing: -0.110px; }

.dock-shadow { position: absolute; left: 670px; top: 1872px; width: 2010px; height: 100px; box-shadow: 0 0 90px 10px rgba(0, 0, 0, .36); }
```
